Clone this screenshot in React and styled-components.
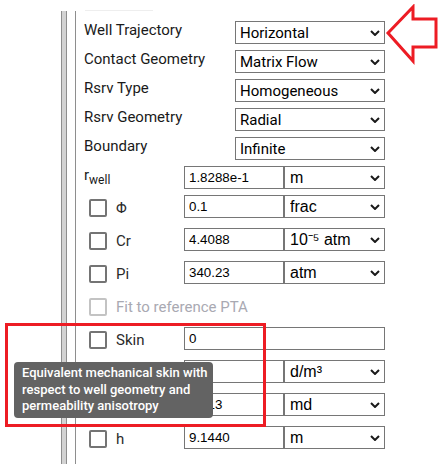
import React from "react";
import styled, { createGlobalStyle } from "styled-components";

const Global = createGlobalStyle`
  html, body { margin: 0; padding: 0; background: #fff; }
  body {
    width: 444px;
    height: 464px;
    overflow: hidden;
    font-family: Roboto, "Liberation Sans", sans-serif;
  }
`;

const Page = styled.div`
  position: relative;
  width: 444px;
  height: 464px;
  overflow: hidden;
  display: flex;
  flex-direction: column;
`;

const TopStrip = styled.div`
  height: 11px;
  flex: none;
  padding-left: 85px;
  display: flex;
  align-items: flex-end;
`;

const FaintLine = styled.div`
  width: 68px;
  height: 1px;
  background: #eeeeee;
`;

const Main = styled.div`
  flex: 1;
  display: flex;
`;

const Gutter = styled.div`
  width: 61px;
  flex: none;
`;

const Bar = styled.div`
  width: 4px;
  flex: none;
  border-left: 1px solid #8e8e8e;
  border-right: 1px solid #8e8e8e;
  background: #d3d3d3;
`;

const Panel = styled.div`
  flex: 1;
  margin-left: 8px;
  border-left: 1px solid #8e8e8e;
  padding: 10px 0 0 8px;
  display: flex;
  flex-direction: column;
`;

const Group = styled.div`
  display: flex;
  flex-direction: column;
  gap: ${(p) => p.$gap}px;
  margin-top: ${(p) => p.$top || 0}px;
`;

const SelectRow = styled.div`
  display: grid;
  grid-template-columns: 151px 150px;
  height: 23px;
`;

const ParamRow = styled.div`
  display: grid;
  grid-template-columns: 100px ${(p) => (p.$wide ? "201px" : "100px 101px")};
  height: 23px;
`;

const FieldLabel = styled.div`
  font-size: 15px;
  line-height: 18px;
  color: #1a1a1a;
  white-space: nowrap;
`;

const Sub = styled.sub`
  font-size: 12px;
  vertical-align: -4px;
  line-height: 0;
`;

const CheckLabel = styled.label`
  display: flex;
  align-items: center;
  gap: 9px;
  padding-left: 5px;
  padding-top: 2px;
  font-size: 15px;
  color: ${(p) => (p.$disabled ? "#a9a9b2" : "#2b2b2b")};
  white-space: nowrap;
`;

const Check = styled.input.attrs({ type: "checkbox" })`
  appearance: none;
  -webkit-appearance: none;
  margin: 0;
  width: 18px;
  height: 18px;
  flex: none;
  box-sizing: border-box;
  border: 2px solid ${(p) => (p.disabled ? "#c3c3c3" : "#747474")};
  border-radius: 2px;
  background: #fff;
`;

const SelectWrap = styled.div`
  position: relative;
  height: 23px;
`;

const Select = styled.select`
  appearance: none;
  -webkit-appearance: none;
  width: 100%;
  height: 23px;
  box-sizing: border-box;
  border: 1px solid #767676;
  border-radius: 0;
  background: #fff;
  color: #000;
  margin: 0;
  padding: 0 20px 0 ${(p) => (p.$unit ? 5 : 4)}px;
  font-family: ${(p) =>
    p.$unit ? '"Liberation Sans", Arial, sans-serif' : 'Roboto, "Liberation Sans", sans-serif'};
  font-size: ${(p) => (p.$unit ? 16 : 15)}px;
  outline: none;
`;

const Chevron = styled.svg`
  position: absolute;
  right: 5px;
  top: 9px;
  pointer-events: none;
`;

const Input = styled.input`
  width: 100%;
  height: 23px;
  box-sizing: border-box;
  margin: 0;
  border: 1px solid #767676;
  border-radius: 0;
  padding: 0 4px;
  font-family: "Liberation Sans", Arial, sans-serif;
  font-size: 13.33px;
  color: #000;
  background: #fff;
  outline: none;
`;

const Tooltip = styled.div`
  position: absolute;
  left: 14px;
  top: 362px;
  width: 199px;
  height: 56px;
  box-sizing: border-box;
  padding: 3px 8px 0 8px;
  background: #636363;
  border-radius: 4px;
  color: #fff;
  font-family: Roboto, "Liberation Sans", sans-serif;
  font-weight: 500;
  font-size: 13px;
  line-height: 16.5px;
  white-space: nowrap;
`;

const Highlight = styled.div`
  position: absolute;
  left: 5px;
  top: 323px;
  width: 261px;
  height: 104px;
  box-sizing: border-box;
  border: 3px solid #ed1c24;
  pointer-events: none;
`;

const Arrow = styled.svg`
  position: absolute;
  left: 385px;
  top: 4px;
  pointer-events: none;
`;

function Dropdown({ value, unit }) {
  return (
    <SelectWrap>
      <Select $unit={unit} defaultValue={value}>
        <option value={value}>{value}</option>
      </Select>
      <Chevron width="10" height="6" viewBox="0 0 10 6">
        <path d="M1 1 L5 5 L9 1" fill="none" stroke="#1a1a1a" strokeWidth="2" />
      </Chevron>
    </SelectWrap>
  );
}

const topRows = [
  ["Well Trajectory", "Horizontal"],
  ["Contact Geometry", "Matrix Flow"],
  ["Rsrv Type", "Homogeneous"],
  ["Rsrv Geometry", "Radial"],
  ["Boundary", "Infinite"],
];

const checkRows = [
  ["Cr", "4.4088", "10⁻⁵ atm"],
  ["Pi", "340.23", "atm"],
];

/* The labels of the two middle rows are hidden under the tooltip in the reference. */
const lowerRows = [
  ["ct", "", "5.8", "d/m³"],
  ["k", "", "1.013", "md"],
  ["h", "h", "9.1440", "m"],
];

export default function App() {
  return (
    <>
      <Global />
      <Page>
        <TopStrip>
          <FaintLine />
        </TopStrip>
        <Main>
          <Gutter />
          <Bar />
          <Panel>
            <Group $gap={6}>
              {topRows.map(([label, value]) => (
                <SelectRow key={label}>
                  <FieldLabel>{label}</FieldLabel>
                  <Dropdown value={value} />
                </SelectRow>
              ))}
              <ParamRow>
                <FieldLabel>
                  r<Sub>well</Sub>
                </FieldLabel>
                <Input defaultValue="1.8288e-1" />
                <Dropdown value="m" unit />
              </ParamRow>
              <ParamRow>
                <CheckLabel>
                  <Check />
                  Φ
                </CheckLabel>
                <Input defaultValue="0.1" />
                <Dropdown value="frac" unit />
              </ParamRow>
            </Group>
            <Group $gap={10} $top={10}>
              {checkRows.map(([label, value, unit]) => (
                <ParamRow key={label}>
                  <CheckLabel>
                    <Check />
                    {label}
                  </CheckLabel>
                  <Input defaultValue={value} />
                  <Dropdown value={unit} unit />
                </ParamRow>
              ))}
              <ParamRow>
                <CheckLabel $disabled>
                  <Check disabled />
                  Fit to reference PTA
                </CheckLabel>
              </ParamRow>
              <ParamRow $wide>
                <CheckLabel>
                  <Check />
                  Skin
                </CheckLabel>
                <Input defaultValue="0" />
              </ParamRow>
              {lowerRows.map(([key, label, value, unit]) => (
                <ParamRow key={key}>
                  <CheckLabel>
                    <Check />
                    {label}
                  </CheckLabel>
                  <Input defaultValue={value} />
                  <Dropdown value={unit} unit />
                </ParamRow>
              ))}
            </Group>
          </Panel>
        </Main>

        <Tooltip>
          Equivalent mechanical skin with
          <br />
          respect to well geometry and
          <br />
          permeability anisotropy
        </Tooltip>
        <Highlight />
        <Arrow width="56" height="62" viewBox="0 0 56 62">
          <polygon
            points="3,29 28,3 28,15 51,15 51,43 28,43 28,57"
            fill="none"
            stroke="#ed1c24"
            strokeWidth="3"
          />
        </Arrow>
      </Page>
    </>
  );
}
